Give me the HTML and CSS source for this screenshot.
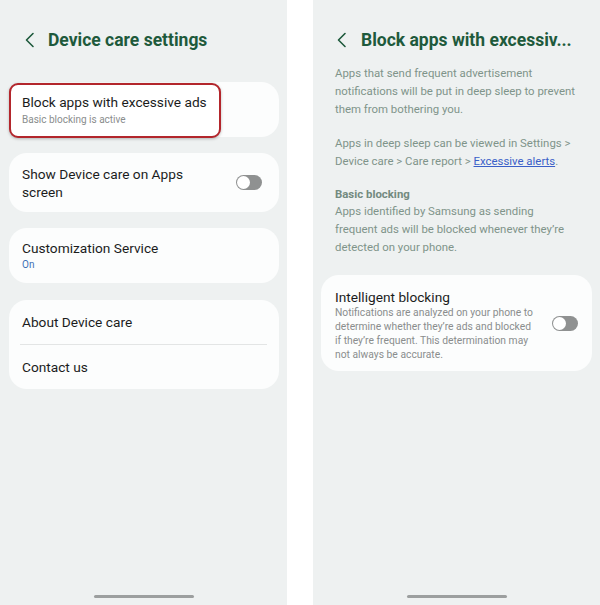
FILE: index.html
```html
<!DOCTYPE html>
<html>
<head>
<meta charset="utf-8">
<link rel="stylesheet" href="styles.css">
</head>
<body>
<div class="screens">
  <section class="phone">
    <div class="status"></div>
    <header class="appbar">
      <svg class="back" width="12" height="16" viewBox="0 0 12 16"><path d="M9 1.5 L2.5 8 L9 14.5" fill="none" stroke="#1e5a3c" stroke-width="1.6" stroke-linecap="round" stroke-linejoin="round"/></svg>
      <h1 class="title">Device care settings</h1>
    </header>
    <div class="list">
      <div class="card card-hl">
        <div class="hl-box">
          <div class="item-title">Block apps with excessive ads</div>
          <div class="item-sub">Basic blocking is active</div>
        </div>
      </div>
      <div class="card card-toggle">
        <div class="item-title two">Show Device care on Apps screen</div>
        <span class="toggle"></span>
      </div>
      <div class="card card-pad">
        <div class="item-title">Customization Service</div>
        <div class="item-sub blue">On</div>
      </div>
      <div class="card card-group">
        <div class="row">About Device care</div>
        <div class="divider"></div>
        <div class="row">Contact us</div>
      </div>
    </div>
    <div class="navbar"><span class="handle"></span></div>
  </section>
  <section class="phone right">
    <div class="status"></div>
    <header class="appbar">
      <svg class="back" width="12" height="16" viewBox="0 0 12 16"><path d="M9 1.5 L2.5 8 L9 14.5" fill="none" stroke="#1e5a3c" stroke-width="1.6" stroke-linecap="round" stroke-linejoin="round"/></svg>
      <h1 class="title">Block apps with excessiv...</h1>
    </header>
    <div class="desc">
      <p>Apps that send frequent advertisement<br>notifications will be put in deep sleep to prevent<br>them from bothering you.</p>
      <p>Apps in deep sleep can be viewed in Settings &gt;<br>Device care &gt; Care report &gt; <a class="link">Excessive alerts</a>.</p>
      <p><strong class="subhead">Basic blocking</strong>Apps identified by Samsung as sending<br>frequent ads will be blocked whenever they’re<br>detected on your phone.</p>
    </div>
    <div class="card card-intel">
      <div class="intel-text">
        <div class="item-title">Intelligent blocking</div>
        <div class="intel-sub">Notifications are analyzed on your phone to<br>determine whether they’re ads and blocked<br>if they’re frequent. This determination may<br>not always be accurate.</div>
      </div>
      <span class="toggle"></span>
    </div>
    <div class="navbar"><span class="handle"></span></div>
  </section>
</div>
</body>
</html>
```

FILE: styles.css
```css
* { box-sizing: border-box; }
html, body { margin: 0; padding: 0; background: #ffffff; }
body { font-family: Roboto, "Noto Sans", sans-serif; color: #1b1c1c; }

.screens {
  display: flex;
  gap: 26px;
  width: 600px;
  height: 605px;
}
.phone {
  width: 287px;
  height: 605px;
  background: #eef1f1;
  display: flex;
  flex-direction: column;
  padding: 0 8px 0 9px;
  position: relative;
}
.phone.right { padding: 0 8px; }

.status { height: 22px; }

.appbar {
  display: flex;
  align-items: center;
  height: 36px;
  padding-left: 15px;
}
.back { flex: none; margin-right: 12px; }
.phone.right .back { margin-right: 13px; }
.title {
  margin: 0;
  font-size: 17.5px;
  font-weight: 700;
  color: #1e5a3c;
  white-space: nowrap;
}

.list {
  margin-top: 24px;
  display: flex;
  flex-direction: column;
  gap: 16px;
}
.card {
  background: #fcfdfd;
  border-radius: 18px;
}
.card-hl { height: 55px; position: relative; }
.hl-box {
  position: absolute;
  left: 0; top: 1px;
  width: 212px;
  height: 55px;
  border: 2px solid #b3262c;
  border-radius: 9px;
  background: #ffffff;
  padding: 8px 0 0 11px;
  box-shadow: 0 1px 3px rgba(0,0,0,0.25);
}
.item-title {
  font-size: 13.7px;
  line-height: 18px;
  color: #1b1c1c;
}
.item-sub {
  font-size: 10px;
  line-height: 14px;
  color: #8a8d8d;
  margin-top: 2px;
}
.item-sub.blue { color: #3c6fb5; margin-top: 1px; }

.card-toggle {
  height: 59px;
  display: flex;
  align-items: center;
  justify-content: space-between;
  padding: 0 17px 0 13px;
}
.item-title.two { width: 190px; }

.toggle {
  flex: none;
  width: 26px;
  height: 15px;
  border-radius: 8px;
  background: #8f9191;
  position: relative;
}
.toggle::before {
  content: "";
  position: absolute;
  left: 1px; top: 1px;
  width: 13px; height: 13px;
  border-radius: 50%;
  background: #ffffff;
}

.card-pad {
  height: 55px;
  padding: 11px 13px 0;
}

.card-group {
  margin-top: 1px;
  height: 89px;
  padding: 0 12px 0 13px;
  display: flex;
  flex-direction: column;
}
.row {
  height: 45px;
  display: flex;
  align-items: center;
  font-size: 13.7px;
}
.divider {
  height: 1px;
  background: #e3e5e5;
  margin-left: -2px;
}

.desc {
  padding: 6px 8px 0 14px;
  font-size: 11.4px;
  line-height: 18px;
  color: #7f948a;
  white-space: nowrap;
}
.desc p { margin: 0 0 16px; }
.subhead {
  display: block;
  line-height: 16px;
  font-weight: 700;
  color: #738a7f;
}
.link { color: #3a5fc8; text-decoration: underline; }

.card-intel {
  margin-top: 3px;
  height: 96px;
  display: flex;
  align-items: center;
  padding: 0 14px 0 14px;
  gap: 10px;
}
.intel-text { flex: 1; padding-top: 3px; }
.intel-sub {
  font-size: 10.3px;
  line-height: 14px;
  color: #8a8d8d;
  margin-top: 0;
  white-space: nowrap;
}

.navbar {
  margin-top: auto;
  height: 10px;
  display: flex;
  justify-content: center;
}
.handle {
  width: 100px;
  height: 3px;
  border-radius: 2px;
  background: #9c9f9f;
}
```
